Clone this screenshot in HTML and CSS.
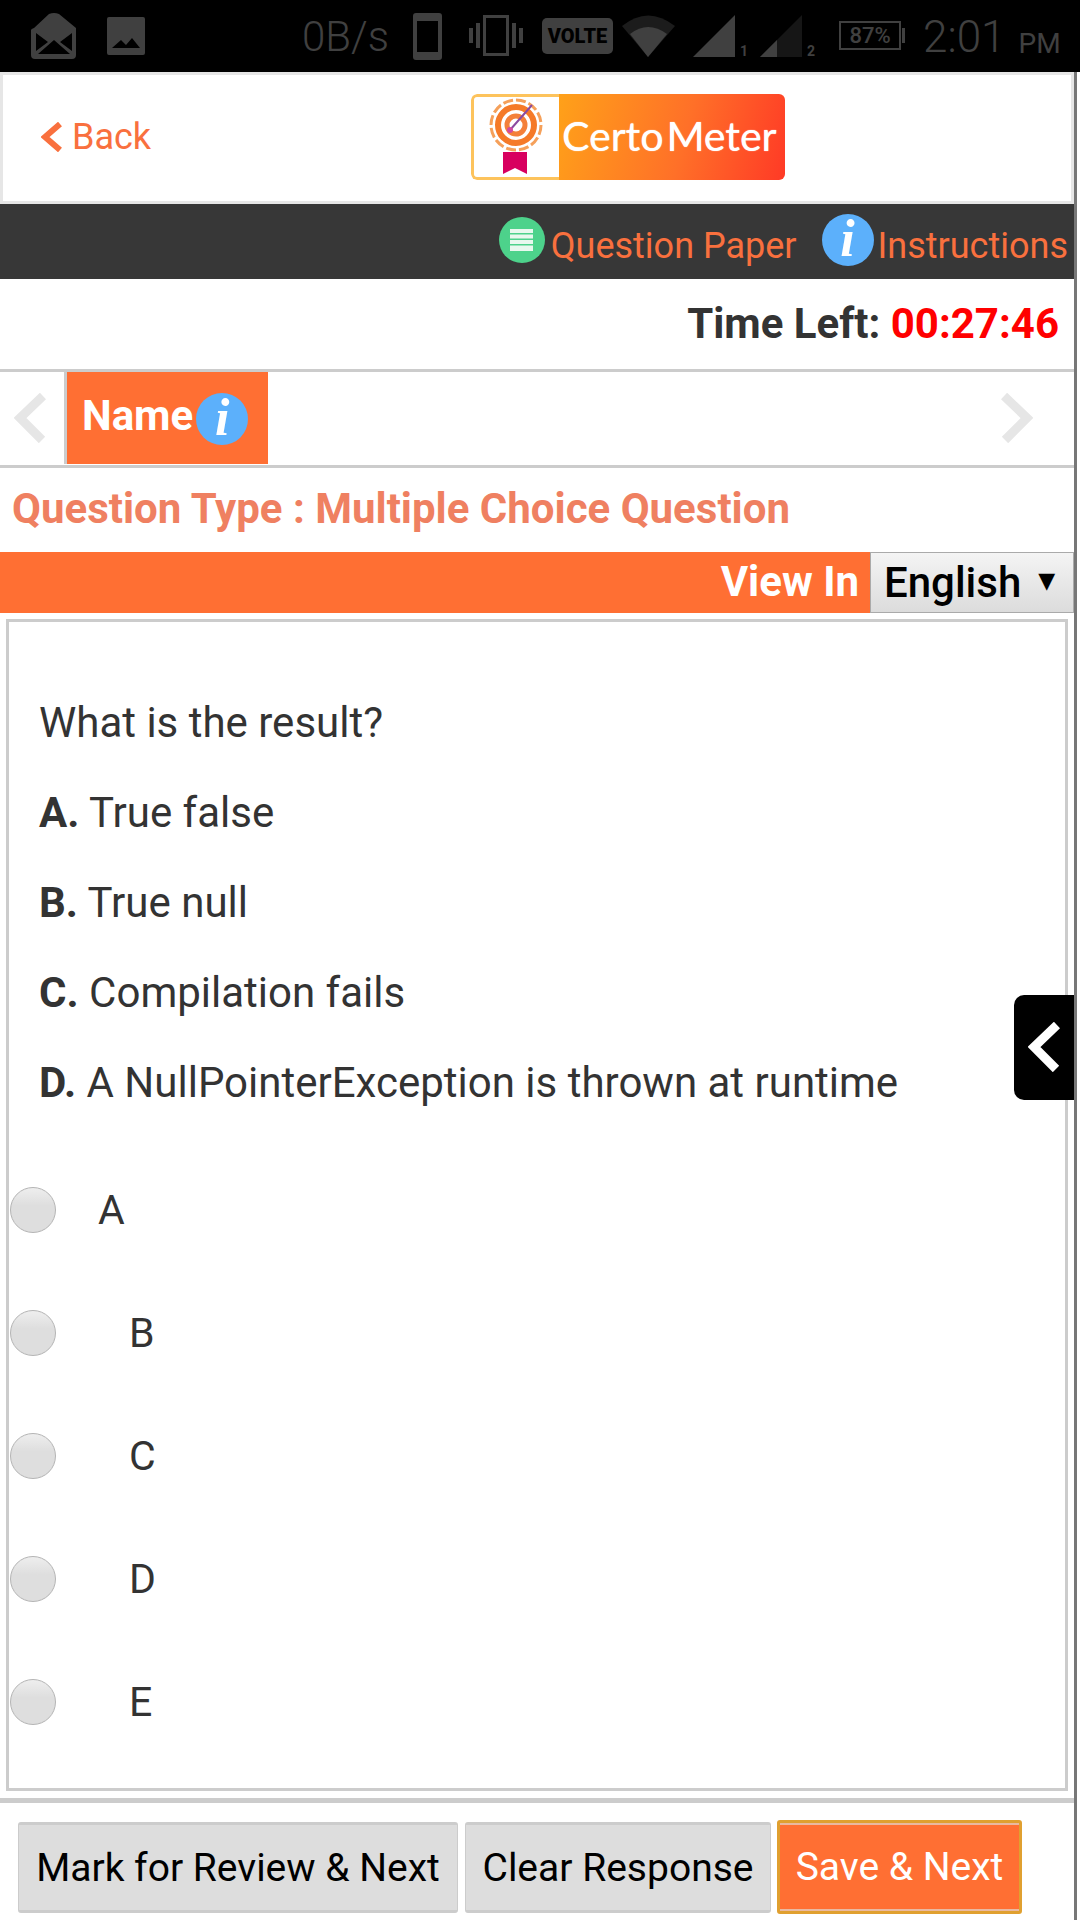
FILE: index.html
```html
<!DOCTYPE html>
<html lang="en">
<head>
  <meta charset="UTF-8" />
  <meta name="viewport" content="width=device-width, initial-scale=1.0" />
  <title>CertoMeter Exam</title>
  <link rel="stylesheet" href="styles.css">
</head>
<body>
  <!-- Phone status bar -->
  <div class="status-bar">
    <svg class="st-mail" width="46" height="46" viewBox="0 0 46 46"><path fill="#404040" fill-rule="evenodd" d="M3 15 L18 1 Q23 -1 28 1 L45 15 V42 Q45 46 41 46 H4 Q0 46 0 42 V17 Q0 16 3 15 Z M5 20 V38 L17 29 Z M41 20 L29 29 L41 38 Z M23 27 L7 41 H39 Z"/></svg>
    <svg class="st-image" width="38" height="38" viewBox="0 0 38 38"><path fill="#404040" fill-rule="evenodd" d="M2 0 H36 Q38 0 38 2 V36 Q38 38 36 38 H2 Q0 38 0 36 V2 Q0 0 2 0 Z M5 31 H33 L25 21 L19 28 L14 23 Z"/></svg>
    <span class="st-speed">0B/s</span>
    <svg class="st-phone" width="29" height="47" viewBox="0 0 29 47"><path fill="#404040" fill-rule="evenodd" d="M3 0 H26 Q29 0 29 3 V44 Q29 47 26 47 H3 Q0 47 0 44 V3 Q0 0 3 0 Z M4 8 V39 H25 V8 Z"/></svg>
    <svg class="st-vibrate" width="54" height="41" viewBox="0 0 54 41"><path fill="#404040" fill-rule="evenodd" d="M14 0 H40 V41 H14 Z M17 3 V38 H37 V3 Z M0 13 H4 V28 H0 Z M7 8 H11 V33 H7 Z M43 8 H47 V33 H43 Z M50 13 H54 V28 H50 Z"/></svg>
    <span class="st-volte">VOLTE</span>
    <svg class="st-wifi" width="53" height="42" viewBox="0 0 53 42"><path fill="#1c1c1c" d="M0 11 Q26 -10 53 11 L26 42 Z"/><path fill="#404040" d="M8 19 Q26 5 45 19 L26 42 Z"/></svg>
    <svg class="st-signal" width="42" height="42" viewBox="0 0 42 42"><path fill="#404040" d="M0 42 L42 0 V42 Z"/></svg>
    <span class="st-sim">1</span>
    <svg class="st-signal" width="42" height="42" viewBox="0 0 42 42"><path fill="#161616" d="M0 42 L42 0 V42 Z"/><path fill="#404040" d="M0 42 L17 25 V42 Z"/></svg>
    <span class="st-sim">2</span>
    <div class="st-battery"><span>87%</span></div>
    <div class="st-nub"></div>
    <span class="st-time">2:01</span>
    <span class="st-ampm">PM</span>
  </div>

  <div class="page">
    <!-- Logo header -->
    <div class="top-header">
      <a class="back-link">
        <svg width="21" height="30" viewBox="0 0 21 30"><path fill="none" stroke="#f9703e" stroke-width="6" d="M19 2 L4 15 L19 28"/></svg>
        <span>Back</span>
      </a>
      <div class="logo">
        <div class="logo-mark">
          <svg width="64" height="78" viewBox="0 0 64 78">
            <path fill="#d8005f" d="M19 55 H43 V77 L31 71 L19 77 Z"/>
            <circle cx="32" cy="28" r="25" fill="none" stroke="#f5a05a" stroke-width="3" stroke-dasharray="10 3"/>
            <circle cx="32" cy="28" r="18" fill="none" stroke="#f57a28" stroke-width="6"/>
            <circle cx="32" cy="28" r="9" fill="none" stroke="#f4803a" stroke-width="5"/>
            <path stroke="#8a4aa0" stroke-width="2" d="M26 33 L48 8"/>
            <circle cx="26" cy="33" r="3" fill="#d24aa0"/>
          </svg>
        </div>
        <div class="logo-name">Certo<span class="logo-gap"></span>Meter</div>
      </div>
    </div>

    <!-- Paper and instruction links -->
    <div class="tool-bar">
      <span class="paper-icon">
        <svg width="23" height="22" viewBox="0 0 23 22"><path fill="#e8f8ee" d="M0 0 H23 V4 H0 Z M0 5.5 H23 V9.5 H0 Z M0 11 H23 V15 H0 Z M0 16.5 H23 V22 H0 Z"/></svg>
      </span>
      <a class="tool-link paper-link">Question Paper</a>
      <span class="info-icon info-large">i</span>
      <a class="tool-link">Instructions</a>
    </div>

    <div class="time-row">Time Left: <span class="time-value">00:27:46</span></div>

    <!-- Section tabs -->
    <div class="section-row">
      <div class="section-prev">
        <svg width="32" height="50" viewBox="0 0 32 50"><path fill="none" stroke="#e6e6e6" stroke-width="9" d="M29 3 L6 25 L28 47"/></svg>
      </div>
      <div class="section-tab">
        <span>Name</span>
        <span class="info-icon">i</span>
      </div>
      <div class="section-next">
        <svg width="32" height="50" viewBox="0 0 32 50"><path fill="none" stroke="#e6e6e6" stroke-width="9" d="M3 3 L26 25 L4 47"/></svg>
      </div>
    </div>

    <div class="type-row">Question Type : Multiple Choice Question</div>

    <div class="view-row">
      <span class="view-label">View In</span>
      <div class="lang-select">
        <span>English</span>
        <span class="lang-arrow">▼</span>
      </div>
    </div>

    <!-- Question -->
    <div class="question-panel">
      <div class="question-text">
        <p>What is the result?</p>
        <p><strong>A.</strong> True false</p>
        <p><strong>B.</strong> True null</p>
        <p><strong>C.</strong> Compilation fails</p>
        <p><strong>D.</strong> A NullPointerException is thrown at runtime</p>
      </div>
      <div class="options">
        <div class="option"><span class="radio"></span><span class="option-label first">A</span></div>
        <div class="option"><span class="radio"></span><span class="option-label">B</span></div>
        <div class="option"><span class="radio"></span><span class="option-label">C</span></div>
        <div class="option"><span class="radio"></span><span class="option-label">D</span></div>
        <div class="option"><span class="radio"></span><span class="option-label">E</span></div>
      </div>
    </div>

    <!-- Side drawer handle -->
    <div class="drawer-handle">
      <svg width="32" height="50" viewBox="0 0 32 50"><path fill="none" stroke="#fff" stroke-width="9" d="M29 3 L6 25 L28 47"/></svg>
    </div>

    <div class="footer-rule"></div>
    <div class="footer">
      <button class="btn btn-review">Mark for Review &amp; Next</button>
      <button class="btn btn-clear">Clear Response</button>
      <button class="btn btn-save">Save &amp; Next</button>
    </div>
  </div>
</body>
</html>
```

FILE: styles.css
```css
* {
  box-sizing: border-box;
}
body {
  margin: 0;
  width: 1080px;
  height: 1920px;
  overflow: hidden;
  background: #fff;
  font-family: Roboto, "Liberation Sans", sans-serif;
  color: #333;
}

/* status bar */
.status-bar {
  height: 72px;
  background: #000;
  display: flex;
  align-items: flex-start;
  color: #404040;
}
.st-mail { margin: 13px 0 0 31px; }
.st-image { margin: 17px 0 0 30px; }
.st-speed {
  margin: 13px 0 0 157px;
  width: 87px;
  font-size: 42px;
  line-height: 48px;
  font-weight: 300;
  white-space: nowrap;
}
.st-phone { margin: 13px 0 0 24px; }
.st-vibrate { margin: 15px 0 0 27px; }
.st-volte {
  margin: 18px 0 0 19px;
  width: 71px;
  height: 36px;
  border-radius: 5px;
  background: #404040;
  color: #000;
  font-size: 20px;
  font-weight: 900;
  line-height: 36px;
  text-align: center;
}
.st-wifi { margin: 15px 0 0 9px; }
.st-signal { margin: 15px 0 0 18px; }
.st-sim + .st-signal { margin-left: 6px; }
.st-sim {
  width: 14px;
  margin: 43px 0 0 5px;
  font-size: 14px;
  font-weight: 700;
  line-height: 16px;
}
.st-battery {
  margin: 21px 0 0 18px;
  width: 62px;
  height: 29px;
  border: 2px solid #404040;
  text-align: center;
  font-size: 22px;
  font-weight: 500;
  line-height: 25px;
}
.st-nub {
  margin: 28px 0 0 1px;
  width: 3px;
  height: 15px;
  background: #404040;
}
.st-time {
  margin: 12px 0 0 18px;
  font-size: 44px;
  line-height: 50px;
  font-weight: 300;
}
.st-ampm {
  margin: 28px 0 0 13px;
  font-size: 28px;
  line-height: 32px;
}

.page {
  position: relative;
  width: 1077px;
  height: 1848px;
  border-right: 3px solid #777;
}

/* logo header */
.top-header {
  height: 132px;
  border: 3px solid #e6e6e6;
  background: #fff;
  display: flex;
  align-items: center;
}
.back-link {
  width: 468px;
  padding-left: 38px;
  margin-top: -2px;
  display: flex;
  align-items: center;
  gap: 10px;
  color: #f9703e;
  font-size: 36px;
}
.logo {
  width: 314px;
  height: 86px;
  margin-top: -2px;
  display: flex;
  border-radius: 6px;
  overflow: hidden;
}
.logo-mark {
  width: 88px;
  background: #fff;
  border: 3px solid #fdc35c;
  border-right: 0;
  border-radius: 6px 0 0 6px;
  padding: 0 0 0 10px;
}
.logo-name {
  flex: 1;
  background: linear-gradient(105deg, #ffa119, #ff7028 55%, #ff3a26);
  color: #fff;
  font-family: Lato, sans-serif;
  font-size: 41px;
  line-height: 84px;
  padding-left: 3px;
  white-space: nowrap;
  text-shadow: 0 0 1px #fff;
}
.logo-gap {
  display: inline-block;
  width: 3px;
}

/* tools */
.tool-bar {
  height: 75px;
  background: #373737;
  display: flex;
  align-items: center;
  justify-content: flex-end;
  padding-right: 6px;
}
.tool-link {
  color: #f9703e;
  font-size: 36px;
  line-height: 75px;
  padding-top: 10px;
}
.paper-link {
  margin: 0 25px 0 6px;
}
.paper-icon {
  width: 46px;
  height: 46px;
  margin-top: -4px;
  border-radius: 50%;
  background: #4dd28b;
  display: flex;
  align-items: center;
  justify-content: center;
}
.info-icon {
  width: 52px;
  height: 52px;
  border-radius: 50%;
  background: #5cb0fb;
  color: #fff;
  font-family: "Liberation Serif", serif;
  font-style: italic;
  font-weight: 700;
  font-size: 52px;
  line-height: 50px;
  text-align: center;
  flex: none;
}
.info-large {
  margin-right: 4px;
  margin-top: -4px;
}

.time-row {
  height: 93px;
  border-bottom: 3px solid #ccc;
  padding: 20px 15px 0 0;
  text-align: right;
  font-size: 42px;
  font-weight: 700;
  line-height: 49px;
}
.time-value {
  color: #f00;
}

/* section tabs */
.section-row {
  height: 96px;
  border-bottom: 3px solid #ccc;
  display: flex;
}
.section-prev {
  width: 67px;
  height: 92px;
  border-right: 3px solid #ccc;
  padding: 21px 0 0 14px;
}
.section-tab {
  width: 201px;
  height: 92px;
  background: #ff6f33;
  color: #fff;
  font-size: 42px;
  font-weight: 700;
  display: flex;
  align-items: center;
  padding-left: 15px;
  gap: 3px;
}
.section-tab span:first-child {
  margin-top: -6px;
}
.section-tab .info-icon {
  margin-top: 2px;
  font-size: 52px;
}
.section-next {
  margin-left: auto;
  padding: 21px 41px 0 0;
}

.type-row {
  height: 84px;
  padding: 16px 0 0 12px;
  color: #ef8061;
  font-size: 42px;
  font-weight: 700;
  line-height: 49px;
}

.view-row {
  height: 61px;
  background: #ff6f33;
  display: flex;
  justify-content: flex-end;
  align-items: stretch;
}
.view-label {
  color: #fff;
  font-size: 42px;
  font-weight: 700;
  line-height: 60px;
  margin-right: 11px;
}
.lang-select {
  width: 204px;
  border: 1px solid #aaa;
  background: linear-gradient(#f4f4f4, #dcdcdc);
  color: #000;
  font-size: 42px;
  font-weight: 500;
  line-height: 60px;
  padding-left: 13px;
  display: flex;
}
.lang-arrow {
  font-family: "DejaVu Sans", sans-serif;
  font-size: 22px;
  margin-left: 17px;
  margin-top: -2px;
}

/* question */
.question-panel {
  height: 1172px;
  margin: 6px 6px 0;
  border: 3px solid #ccc;
}
.question-text {
  padding: 56px 30px 0;
  font-size: 42px;
}
.question-text p {
  margin: 0;
  height: 90px;
  line-height: 90px;
}
.options {
  margin-top: 20px;
}
.option {
  height: 123px;
  display: flex;
  align-items: center;
  padding-left: 1px;
}
.radio {
  width: 46px;
  height: 46px;
  border-radius: 50%;
  border: 1px solid #b4b4b4;
  background: linear-gradient(#eee, #dedede 40%, #dedede);
  flex: none;
}
.option-label {
  margin-left: 73px;
  font-size: 41px;
}
.option-label.first {
  margin-left: 42px;
}

.drawer-handle {
  position: absolute;
  top: 923px;
  right: 0;
  width: 60px;
  height: 105px;
  background: #000;
  border-radius: 10px 0 0 10px;
  padding: 27px 0 0 14px;
}

/* footer buttons */
.footer-rule {
  height: 5px;
  margin-top: 7px;
  background: #ccc;
}
.footer {
  display: flex;
  padding: 19px 0 0 18px;
  gap: 7px;
}
.btn {
  height: 91px;
  padding: 0;
  border: 1px solid #ccc;
  border-top-width: 3px;
  border-bottom-width: 3px;
  border-radius: 3px;
  background: #ddd;
  color: #000;
  font-family: Roboto, sans-serif;
  font-size: 39px;
}
.btn-review { width: 440px; }
.btn-clear { width: 306px; }
.btn-save {
  width: 245px;
  height: 94px;
  margin: -2px 0 0 -1px;
  background: #ff6f33;
  color: #fff;
  border: 3px solid #e0a030;
  box-shadow: inset 0 2px 0 #e9b9a0, inset 0 -2px 0 #e9b9a0;
}
```
